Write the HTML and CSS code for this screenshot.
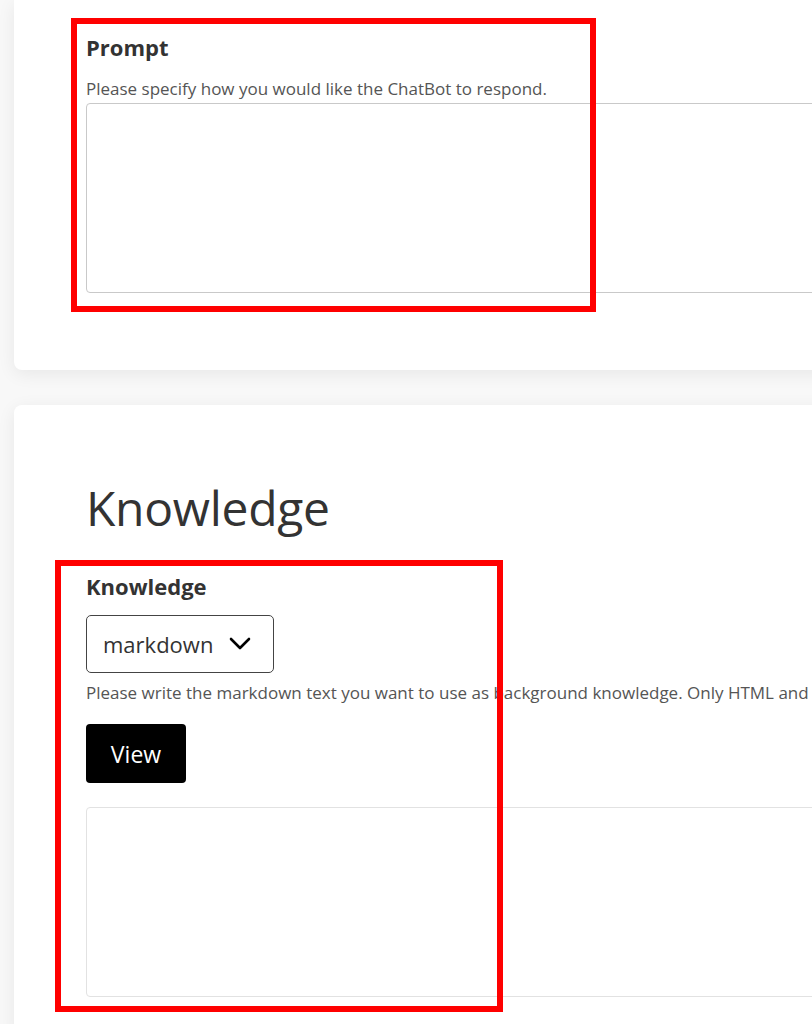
FILE: index.html
```html
<!DOCTYPE html>
<html lang="en">
<head>
    <meta charset="UTF-8">
    <meta name="viewport" content="width=device-width, initial-scale=1.0">
    <title>ChatBot Settings</title>
    <link rel="stylesheet" href="styles.css">
</head>
<body>
    <div class="page">
        <section class="card card-top">
            <div class="form-group">
                <label for="prompt">Prompt</label>
                <p class="help">Please specify how you would like the ChatBot to respond.</p>
                <textarea id="prompt" class="prompt-area"></textarea>
            </div>
            <div class="mark mark-prompt"></div>
        </section>

        <section class="card card-knowledge">
            <h1>Knowledge</h1>
            <div class="form-group">
                <label for="knowledgeType">Knowledge</label>
                <div class="select">
                    <span>markdown</span>
                    <svg width="22" height="14" viewBox="0 0 22 14">
                        <path d="M2 2 L11 11 L20 2" fill="none" stroke="#000" stroke-width="2.6" stroke-linecap="round" stroke-linejoin="round"/>
                    </svg>
                </div>
                <p class="help help-wide">Please write the markdown text you want to use as background knowledge. Only HTML and</p>
                <button type="button" class="btn-view">View</button>
                <textarea id="knowledge" class="knowledge-area"></textarea>
            </div>
            <div class="mark mark-knowledge"></div>
        </section>
    </div>
</body>
</html>
```

FILE: styles.css
```css
body {
    margin: 0;
    padding: 0;
    background-color: #f8f8f8;
    font-family: "Open Sans", "Noto Sans", Arial, sans-serif;
    color: #333;
    overflow: hidden;
}
.page {
    width: 1200px;
    padding-left: 14px;
}
.card {
    position: relative;
    background-color: #fff;
    border-radius: 8px;
    box-shadow: 0 4px 18px rgba(0,0,0,0.07);
    padding: 0 0 0 72px;
}
.card-top {
    border-radius: 0 0 8px 8px;
    padding-top: 33px;
    padding-bottom: 77px;
}
.card-knowledge {
    margin-top: 35px;
    padding-top: 73px;
    padding-bottom: 40px;
}
h1 {
    margin: 0 0 34px;
    font-size: 48px;
    font-weight: 500;
    line-height: 60px;
    letter-spacing: -0.3px;
}
label {
    display: block;
    font-size: 22px;
    font-weight: 700;
    line-height: 28px;
}
.help {
    margin: 0;
    font-size: 17px;
    line-height: 22px;
    color: #555;
    white-space: nowrap;
}
.card-top .help {
    margin-top: 17px;
    margin-bottom: 3px;
}
textarea {
    display: block;
    width: 100%;
    height: 190px;
    box-sizing: border-box;
    border-radius: 4px;
    resize: none;
    font-family: inherit;
}
.prompt-area {
    border: 1px solid #c9c9c9;
}
.knowledge-area {
    margin-top: 24px;
    border: 1px solid #e2e2e2;
}
.select {
    display: flex;
    align-items: center;
    justify-content: space-between;
    width: 188px;
    height: 58px;
    box-sizing: border-box;
    margin-top: 15px;
    margin-bottom: 9px;
    padding: 0 22px 0 16px;
    border: 1px solid #444;
    border-radius: 5px;
    font-size: 22px;
}
.btn-view {
    display: block;
    margin-top: 20px;
    width: 100px;
    height: 59px;
    background-color: #000;
    color: #fff;
    border: none;
    border-radius: 4px;
    font-family: inherit;
    font-size: 23px;
}
.mark {
    position: absolute;
    border: 6px solid #ff0000;
    box-sizing: border-box;
    pointer-events: none;
}
.mark-prompt {
    left: 57px;
    top: 18px;
    width: 525px;
    height: 294px;
}
.mark-knowledge {
    left: 41px;
    top: 155px;
    width: 448px;
    height: 452px;
}
```
